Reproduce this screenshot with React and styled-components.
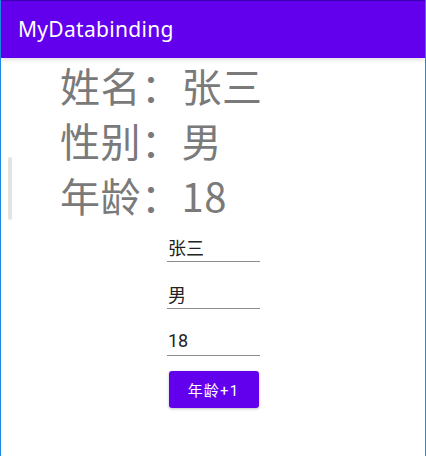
import React, { useState } from 'react'
import styled, { createGlobalStyle } from 'styled-components'

const GlobalStyle = createGlobalStyle`
  html, body {
    margin: 0;
    padding: 0;
    background: #ffffff;
  }
  body {
    font-family: Roboto, "Noto Sans", "Noto Sans CJK SC", sans-serif;
  }
`;

const Screen = styled.div`
  position: relative;
  width: 426px;
  height: 456px;
  box-sizing: border-box;
  border-left: 1px solid #1e88e5;
  border-right: 1px solid #1e88e5;
  background: #ffffff;
  overflow: hidden;
`;

const AppBar = styled.header`
  height: 58px;
  box-sizing: border-box;
  border-top: 1px solid #3a00b0;
  background: #6200ee;
  display: flex;
  align-items: center;
  padding-left: 17px;
  padding-bottom: 2px;
  box-shadow: 0 2px 4px rgba(0, 0, 0, 0.12);
  position: relative;
  z-index: 1;
`;

const Title = styled.h1`
  margin: 0;
  color: #ffffff;
  font-family: "Noto Sans", Roboto, sans-serif;
  font-size: 21px;
  font-weight: 400;
  letter-spacing: 0.3px;
`;

const Info = styled.div`
  display: flex;
  flex-direction: column;
  padding-left: 59px;
`;

const InfoLine = styled.div`
  font-family: "Noto Sans CJK SC", "Noto Sans", sans-serif;
  font-size: 40px;
  font-weight: 400;
  line-height: 55px;
  letter-spacing: 0.5px;
  color: #7a7a7a;
  white-space: nowrap;
`;

const Form = styled.div`
  display: flex;
  flex-direction: column;
  align-items: center;
  padding-left: 1px;
`;

const Field = styled.div`
  width: 93px;
  height: 47px;
`;

const Input = styled.input`
  display: block;
  width: 100%;
  height: 39px;
  box-sizing: border-box;
  border: none;
  border-bottom: 1px solid #8c8c8c;
  outline: none;
  background: transparent;
  padding: 9px 0 0 1px;
  font-family: Roboto, "Noto Sans CJK SC", sans-serif;
  font-size: 18px;
  color: #222222;
`;

const Button = styled.button`
  margin-top: 7px;
  width: 90px;
  height: 37px;
  border: none;
  border-radius: 3px;
  background: #6200ee;
  color: #ffffff;
  font-family: Roboto, "Noto Sans CJK SC", sans-serif;
  font-size: 15px;
  letter-spacing: 1.2px;
  box-shadow: 0 1px 3px rgba(0, 0, 0, 0.25);
  cursor: pointer;
`;

const ScrollThumb = styled.div`
  position: absolute;
  left: 7px;
  top: 157px;
  width: 4px;
  height: 63px;
  border-radius: 2px;
  background: #e3e3e3;
`;

const App = () => {
  const [name, setName] = useState('张三')
  const [sex, setSex] = useState('男')
  const [age, setAge] = useState(18)

  return (
    <Screen>
      <GlobalStyle />
      <AppBar>
        <Title>MyDatabinding</Title>
      </AppBar>
      <ScrollThumb />
      <Info>
        <InfoLine>姓名：张三</InfoLine>
        <InfoLine>性别：男</InfoLine>
        <InfoLine>年龄：{age}</InfoLine>
      </Info>
      <Form>
        <Field>
          <Input value={name} onChange={e => setName(e.target.value)} />
        </Field>
        <Field>
          <Input value={sex} onChange={e => setSex(e.target.value)} />
        </Field>
        <Field>
          <Input value={age} onChange={e => setAge(e.target.value)} />
        </Field>
        <Button onClick={() => setAge(Number(age) + 1)}>年龄+1</Button>
      </Form>
    </Screen>
  )
}

export default App
